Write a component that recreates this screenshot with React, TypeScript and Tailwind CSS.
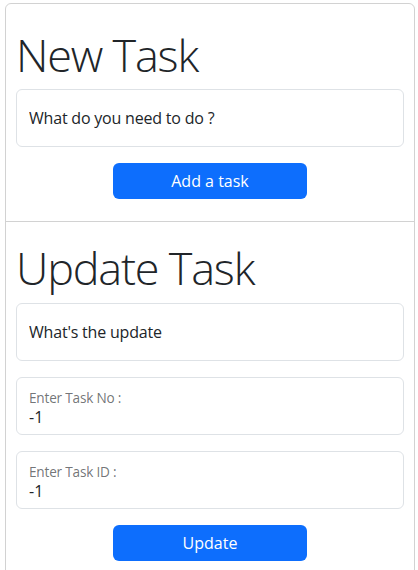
import React from "react";

const font = { fontFamily: '"Segoe UI", "Open Sans", "Noto Sans", sans-serif' };

function FloatInput({ label, value }: { label: string; value: string }) {
  return (
    <div className="relative mb-4">
      <input
        readOnly
        value={value}
        className="block w-full h-[58px] rounded-[6px] border border-[#dee2e6] bg-white px-3 pt-[29px] pb-[7px] text-[16px] leading-[24px] text-[#212529] outline-none"
      />
      <label className="pointer-events-none absolute left-[13px] top-[14px] text-[13.6px] leading-none tracking-[-0.2px] text-[rgba(33,37,41,0.65)]">
        {label}
      </label>
    </div>
  );
}

function PlainInput({ placeholder }: { placeholder: string }) {
  return (
    <div className="mb-4">
      <input
        placeholder={placeholder}
        className="block w-full h-[58px] rounded-[6px] border border-[#dee2e6] bg-white px-3 text-[16px] leading-[24px] tracking-[-0.2px] text-[#212529] placeholder:text-[#212529] outline-none"
      />
    </div>
  );
}

function Btn({ children }: { children: React.ReactNode }) {
  return (
    <button className="mx-auto block w-1/2 rounded-[6px] bg-[#0d6efd] px-3 py-[6px] text-[16px] leading-[24px] text-white">
      {children}
    </button>
  );
}

export default function App() {
  return (
    <div className="min-h-screen bg-white pl-[5px] pr-[3px] pt-[3px]" style={font}>
      <div className="rounded-t-[6px] border border-[rgba(0,0,0,0.175)]">
        <section className="px-[10px] pt-[24px] pb-[22px]">
          <h1 className="mb-[7px] text-[45px] font-light leading-[1.2] tracking-[-1.2px] text-[#212529]">New Task</h1>
          <PlainInput placeholder="What do you need to do ?" />
          <Btn>Add a task</Btn>
        </section>
        <section className="border-t border-[rgba(0,0,0,0.175)] px-[10px] pt-[19px] pb-[20px]">
          <h1 className="mb-[8px] text-[45px] font-light leading-[1.2] tracking-[-1.2px] text-[#212529]">Update Task</h1>
          <PlainInput placeholder="What's the update" />
          <FloatInput label="Enter Task No :" value="-1" />
          <FloatInput label="Enter Task ID :" value="-1" />
          <Btn>Update</Btn>
        </section>
      </div>
    </div>
  );
}
